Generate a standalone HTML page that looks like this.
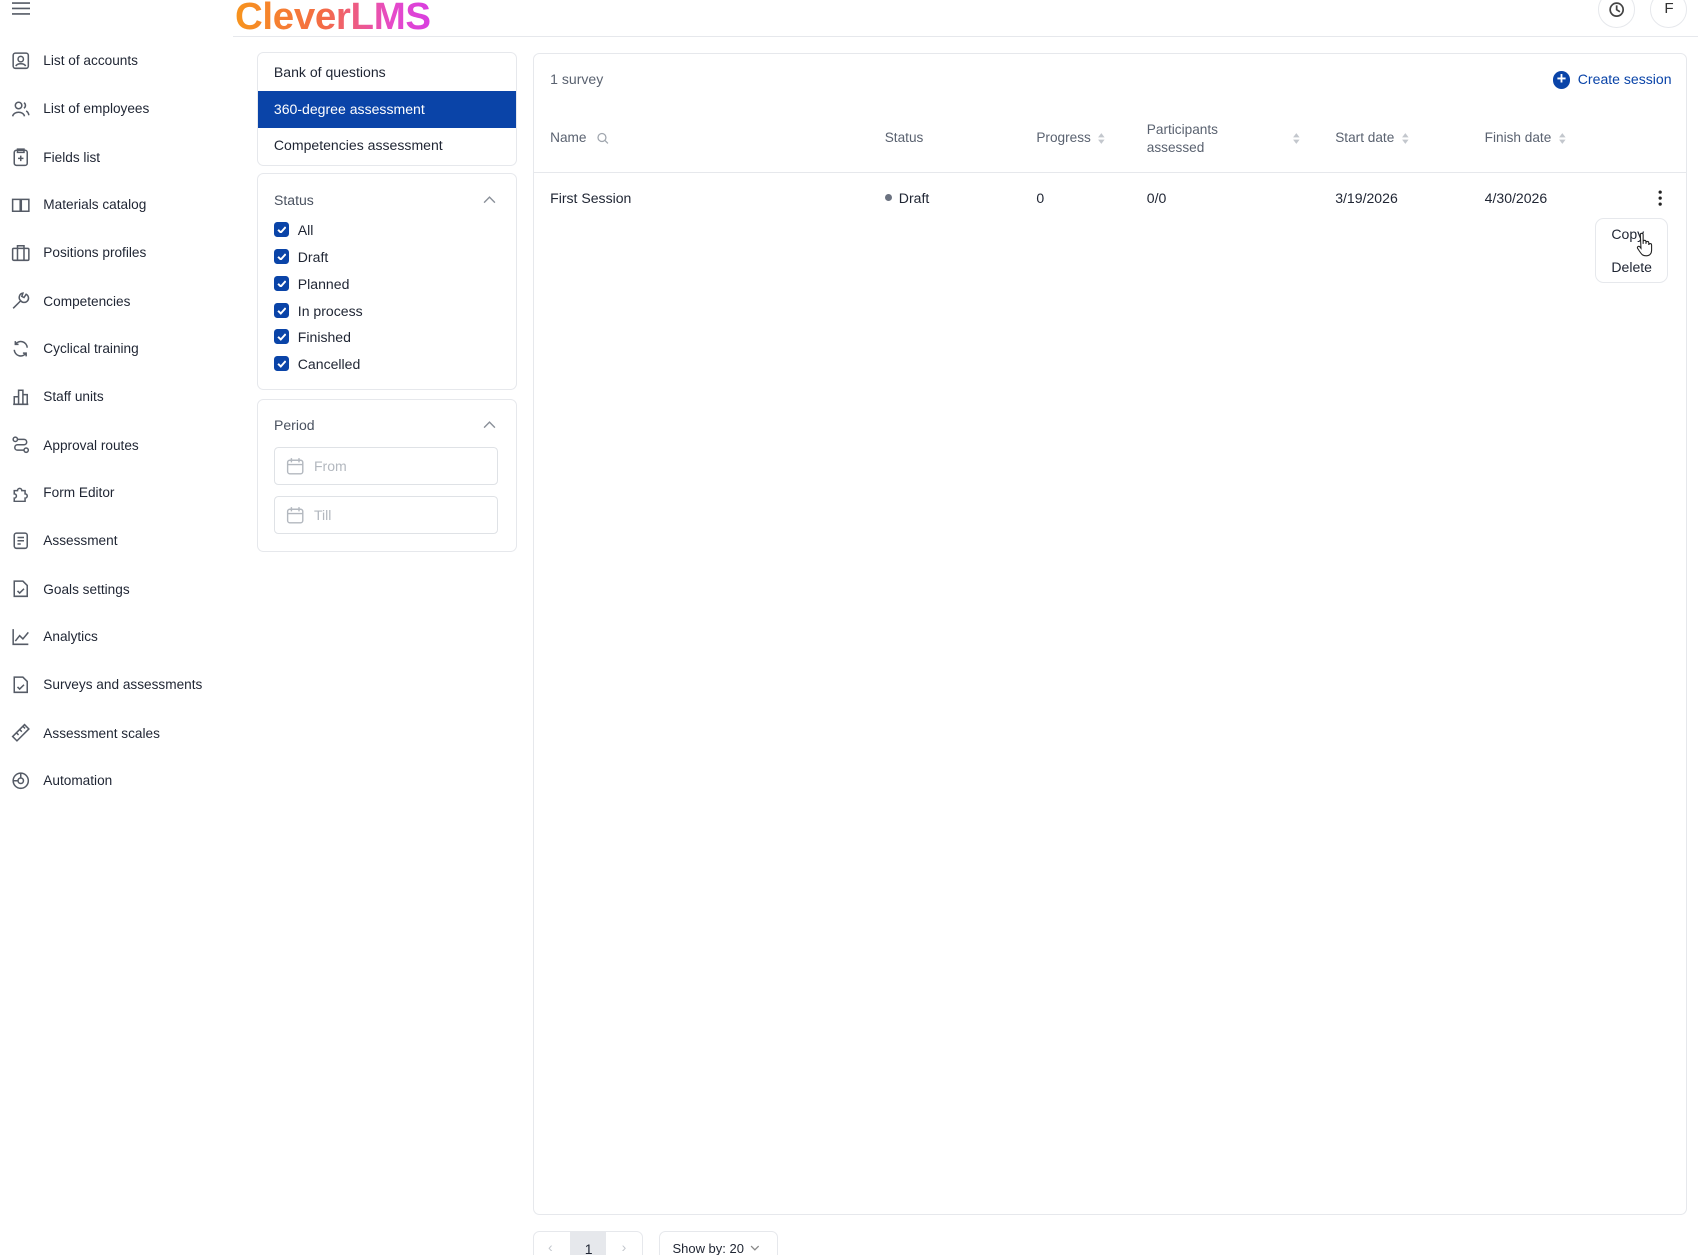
<!DOCTYPE html>
<html><head><meta charset="utf-8"><style>
*{box-sizing:border-box;margin:0;padding:0}
html,body{width:1698px;height:1255px;overflow:hidden;background:#fff}
#w{zoom:1.0829;position:relative;width:1568px;height:1159px;font-family:"Liberation Sans",sans-serif;color:#1f2533;font-size:13px}
.a{position:absolute}
.nav{position:absolute;left:10px;display:flex;align-items:center;height:20px;font-size:12.6px}
.nav svg{width:18px;height:18px;margin-right:12px;fill:none;stroke:#555b66;stroke-width:1.4}
.box{position:absolute;border:1px solid #e6e8ec;border-radius:6px;background:#fff}
.cb{position:absolute;left:253px;display:flex;align-items:center;height:16px}
.cb i{width:14px;height:14px;background:#0a44a8;border-radius:3px;margin-right:8px;display:flex;align-items:center;justify-content:center}
.th{position:absolute;top:118px;color:#5a6270;font-size:12.6px}
.sort{display:inline-block;vertical-align:middle;margin-left:6px;width:8px;height:12px}
.inp{position:absolute;left:253px;width:207px;height:35px;border:1px solid #dfe2e6;border-radius:4px;color:#b3b8bf;display:flex;align-items:center;padding-left:10px}
.inp svg{margin-right:9px}
</style></head><body><div id="w">
<svg class="a" style="left:11px;top:2px" width="17" height="12" stroke="#555b66" stroke-width="1.5"><path d="M0 1h17M0 6h17M0 11h17"/></svg>
<div class="a" style="left:217px;top:-5px;font-size:35.5px;line-height:40px;font-weight:bold;background:linear-gradient(90deg,#f7941d 0%,#f46b45 45%,#e64ac9 80%,#d83ee0 100%);-webkit-background-clip:text;color:transparent;letter-spacing:-0.3px">CleverLMS</div>
<div class="a" style="left:215px;top:33px;width:1353px;height:1px;background:#e6e8ec"></div>
<div class="a" style="left:1476px;top:-8px;width:34px;height:34px;border:1px solid #e6e8ec;border-radius:50%"></div>
<svg class="a" style="left:1485px;top:1px" width="16" height="16" fill="none" stroke="#444" stroke-width="1.6"><circle cx="8" cy="8" r="6"/><path d="M8 4v4l3 2"/></svg>
<div class="a" style="left:1524px;top:-8px;width:34px;height:34px;border:1px solid #e6e8ec;border-radius:50%"></div>
<div class="a" style="left:1537px;top:0px;font-size:14px;color:#333">F</div>

<div class="nav" style="top:46px"><svg viewBox="0 0 18 18"><rect x="2" y="2" width="14" height="14" rx="2"/><circle cx="9" cy="7.5" r="2.5"/><path d="M4.5 14c1-3 8-3 9 0"/></svg>List of accounts</div>
<div class="nav" style="top:90px"><svg viewBox="0 0 18 18"><circle cx="7" cy="6" r="3"/><path d="M1.5 16c1-5 10-5 11 0M12 3.5a3 3 0 010 5M14 11c1.5.8 2.3 2.5 2.5 4"/></svg>List of employees</div>
<div class="nav" style="top:135px"><svg viewBox="0 0 18 18"><rect x="3" y="3" width="12" height="14" rx="2"/><path d="M6 2h6v3H6zM9 8v5M6.5 10.5h5"/></svg>Fields list</div>
<div class="nav" style="top:179px"><svg viewBox="0 0 18 18"><path d="M1.5 4h7v11h-7zM9.5 4h7v11h-7z"/></svg>Materials catalog</div>
<div class="nav" style="top:223px"><svg viewBox="0 0 18 18"><rect x="1.5" y="5" width="15" height="11" rx="1"/><path d="M6 5V2.5h6V5M6 5v11M12 5v11"/></svg>Positions profiles</div>
<div class="nav" style="top:268px"><svg viewBox="0 0 18 18"><path d="M2 16l7-7M9 9a4 4 0 105-6l-2 3-2-1 1-3a4 4 0 00-2 7"/></svg>Competencies</div>
<div class="nav" style="top:312px"><svg viewBox="0 0 18 18"><path d="M15 8a6 6 0 00-11-3M3 10a6 6 0 0011 3M4 2v3h3M14 16v-3h-3"/></svg>Cyclical training</div>
<div class="nav" style="top:356px"><svg viewBox="0 0 18 18"><path d="M2 16h14M3 16V9h4v7M7 16V3h4v13M11 16V7h4v9"/></svg>Staff units</div>
<div class="nav" style="top:401px"><svg viewBox="0 0 18 18"><circle cx="4" cy="4" r="2"/><circle cx="14" cy="14" r="2"/><path d="M6 4h6a2.5 2.5 0 010 5H6a2.5 2.5 0 000 5h6"/></svg>Approval routes</div>
<div class="nav" style="top:445px"><svg viewBox="0 0 18 18"><path d="M3 7h3a2 2 0 114 0h3v3a2 2 0 110 4v3H3v-3a2 2 0 100-4z"/></svg>Form Editor</div>
<div class="nav" style="top:489px"><svg viewBox="0 0 18 18"><rect x="3" y="2" width="12" height="14" rx="2"/><path d="M6 6h6M6 9h6M6 12h3"/></svg>Assessment</div>
<div class="nav" style="top:534px"><svg viewBox="0 0 18 18"><path d="M3 2h8l4 4v10H3zM6 11l2 2 4-4"/></svg>Goals settings</div>
<div class="nav" style="top:578px"><svg viewBox="0 0 18 18"><path d="M2 2v14h14M4 13l4-5 3 3 5-6"/></svg>Analytics</div>
<div class="nav" style="top:622px"><svg viewBox="0 0 18 18"><path d="M3 2h8l4 4v10H3zM6 11l2 2 4-4"/></svg>Surveys and assessments</div>
<div class="nav" style="top:667px"><svg viewBox="0 0 18 18"><path d="M1.5 12.5l11-11 4 4-11 11zM5 9l2 2M8 6l2 2M11 3l2 2"/></svg>Assessment scales</div>
<div class="nav" style="top:711px"><svg viewBox="0 0 18 18"><circle cx="9" cy="9" r="7"/><circle cx="9" cy="9" r="2.5"/><path d="M9 2v4M2 9h4"/></svg>Automation</div>

<div class="box" style="left:237px;top:48px;width:240px;height:105px;overflow:hidden">
<div class="a" style="left:15px;top:10px">Bank of questions</div>
<div class="a" style="left:0;top:35px;width:240px;height:34px;background:#0a44a8;color:#fff;padding:9px 15px">360-degree assessment</div>
<div class="a" style="left:15px;top:78px">Competencies assessment</div>
</div>
<div class="box" style="left:237px;top:160px;width:240px;height:200px"></div>
<div class="a" style="left:253px;top:177px;color:#4a5260">Status</div>
<svg class="a" style="left:446px;top:180px" width="12" height="8" fill="none" stroke="#8a9099" stroke-width="1.3"><path d="M1 7l5-5 5 5"/></svg>
<div class="cb" style="top:204px"><i><svg width="9" height="7" fill="none" stroke="#fff" stroke-width="1.8"><path d="M1 3.5l2.5 2.5L8 1"/></svg></i>All</div>
<div class="cb" style="top:229px"><i><svg width="9" height="7" fill="none" stroke="#fff" stroke-width="1.8"><path d="M1 3.5l2.5 2.5L8 1"/></svg></i>Draft</div>
<div class="cb" style="top:254px"><i><svg width="9" height="7" fill="none" stroke="#fff" stroke-width="1.8"><path d="M1 3.5l2.5 2.5L8 1"/></svg></i>Planned</div>
<div class="cb" style="top:279px"><i><svg width="9" height="7" fill="none" stroke="#fff" stroke-width="1.8"><path d="M1 3.5l2.5 2.5L8 1"/></svg></i>In process</div>
<div class="cb" style="top:303px"><i><svg width="9" height="7" fill="none" stroke="#fff" stroke-width="1.8"><path d="M1 3.5l2.5 2.5L8 1"/></svg></i>Finished</div>
<div class="cb" style="top:328px"><i><svg width="9" height="7" fill="none" stroke="#fff" stroke-width="1.8"><path d="M1 3.5l2.5 2.5L8 1"/></svg></i>Cancelled</div>

<div class="box" style="left:237px;top:368px;width:240px;height:142px"></div>
<div class="a" style="left:253px;top:385px;color:#4a5260">Period</div>
<svg class="a" style="left:446px;top:388px" width="12" height="8" fill="none" stroke="#8a9099" stroke-width="1.3"><path d="M1 7l5-5 5 5"/></svg>
<div class="inp" style="top:413px"><svg width="17" height="17" fill="none" stroke="#b3b8bf" stroke-width="1.3"><rect x="1.5" y="3" width="14" height="12.5" rx="2"/><path d="M1.5 7h14M5 1v4M12 1v4"/></svg>From</div>
<div class="inp" style="top:458px"><svg width="17" height="17" fill="none" stroke="#b3b8bf" stroke-width="1.3"><rect x="1.5" y="3" width="14" height="12.5" rx="2"/><path d="M1.5 7h14M5 1v4M12 1v4"/></svg>Till</div>

<div class="box" style="left:492px;top:49px;width:1066px;height:1073px"></div>
<div class="a" style="left:508px;top:66px;color:#5a6270">1 survey</div>
<div class="a" style="left:1434px;top:66px;width:16px;height:16px;border-radius:50%;background:#0a44a8;color:#fff;font-size:15px;line-height:15px;text-align:center;font-weight:bold">+</div>
<div class="a" style="left:1457px;top:66px;color:#0a44a8">Create session</div>
<div class="th" style="left:508px;top:120px">Name <svg class="sort" viewBox="0 0 12 12" style="width:11px" fill="none" stroke="#a0a6ae" stroke-width="1.3"><circle cx="5" cy="5" r="4"/><path d="M8 8l3 3"/></svg></div>
<div class="th" style="left:817px;top:120px">Status</div>
<div class="th" style="left:957px;top:120px">Progress<svg class="sort" viewBox="0 0 8 12" fill="#c3c7cd"><path d="M4 1l3 4H1zM4 11l3-4H1z"/></svg></div>
<div class="th" style="left:1059px;top:112px;line-height:16px">Participants<br>assessed</div>
<svg class="a" style="left:1193px;top:122px" width="8" height="12" fill="#c3c7cd"><path d="M4 1l3 4H1zM4 11l3-4H1z"/></svg>
<div class="th" style="left:1233px;top:120px">Start date<svg class="sort" viewBox="0 0 8 12" fill="#c3c7cd"><path d="M4 1l3 4H1zM4 11l3-4H1z"/></svg></div>
<div class="th" style="left:1371px;top:120px">Finish date<svg class="sort" viewBox="0 0 8 12" fill="#c3c7cd"><path d="M4 1l3 4H1zM4 11l3-4H1z"/></svg></div>
<div class="a" style="left:493px;top:159px;width:1064px;height:1px;background:#e6e8ec"></div>
<div class="a" style="left:508px;top:175px">First Session</div>
<div class="a" style="left:817px;top:179px;width:7px;height:7px;border-radius:50%;background:#6b7280"></div>
<div class="a" style="left:830px;top:175px">Draft</div>
<div class="a" style="left:957px;top:175px">0</div>
<div class="a" style="left:1059px;top:175px">0/0</div>
<div class="a" style="left:1233px;top:175px">3/19/2026</div>
<div class="a" style="left:1371px;top:175px">4/30/2026</div>
<svg class="a" style="left:1531px;top:175px" width="4" height="15" fill="#222"><circle cx="2" cy="2" r="1.5"/><circle cx="2" cy="7.5" r="1.5"/><circle cx="2" cy="13" r="1.5"/></svg>
<div class="box" style="left:1473px;top:201px;width:67px;height:60px;border-radius:8px"></div>
<div class="a" style="left:1488px;top:209px">Copy</div>
<div class="a" style="left:1488px;top:239px">Delete</div>
<svg class="a" style="left:1511px;top:214px" width="18" height="24" fill="#fff" stroke="#222" stroke-width="1"><path d="M4 2.5a1.3 1.3 0 012.6 0V11V9a1.3 1.3 0 012.6 0v2V10a1.3 1.3 0 012.6 0v2a1.3 1.3 0 012.6 0v5c0 3-2 5-5 5s-4-1-6-4l-2-3a1.3 1.3 0 012-1.5l1.2 1.5z"/></svg>

<div class="box" style="left:492px;top:1137px;width:102px;height:40px"></div>
<div class="a" style="left:526px;top:1138px;width:34px;height:30px;background:#e6e8ec"></div>
<div class="a" style="left:540px;top:1146px">1</div>
<div class="a" style="left:506px;top:1144px;color:#c3c7cd">‹</div>
<div class="a" style="left:574px;top:1144px;color:#c3c7cd">›</div>
<div class="box" style="left:609px;top:1137px;width:109px;height:40px"></div>
<div class="a" style="left:621px;top:1146px;font-size:12px">Show by: 20</div>
<svg class="a" style="left:693px;top:1150px" width="9" height="6" fill="none" stroke="#888" stroke-width="1.2"><path d="M1 1l3.5 3.5L8 1"/></svg>
</div></body></html>
